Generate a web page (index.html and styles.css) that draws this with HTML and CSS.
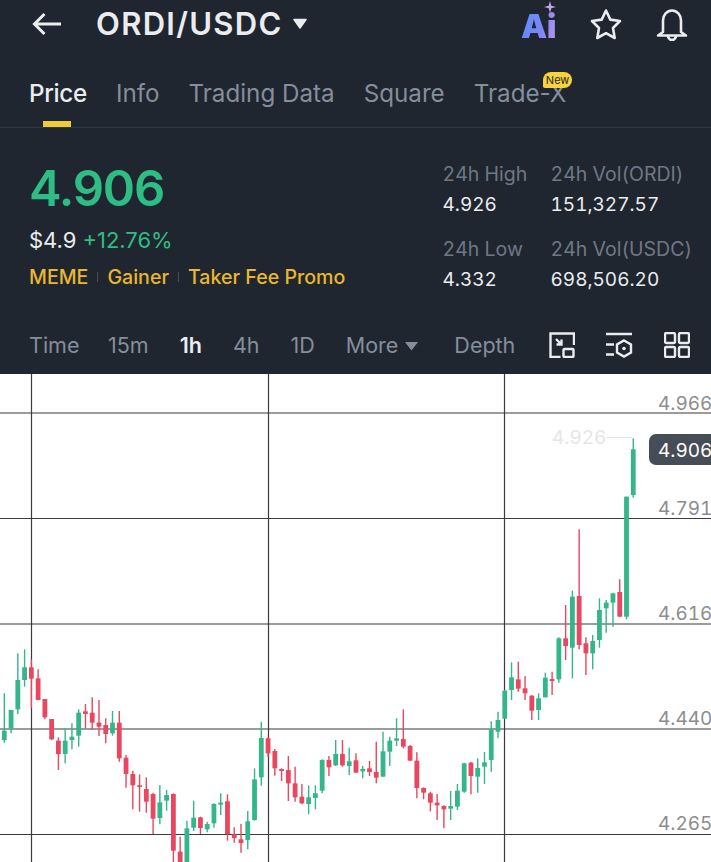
FILE: index.html
```html
<!DOCTYPE html>
<html lang="en">
<head>
    <meta charset="UTF-8">
    <meta name="viewport" content="width=device-width, initial-scale=1.0">
    <title>ORDI/USDC</title>
    <link rel="stylesheet" href="styles.css">
</head>
<body>
    <header class="topbar">
        <svg class="back-icon" width="30" height="24" viewBox="0 0 30 24">
            <path d="M29 12H3M12.5 2L2.5 12L12.5 22"/>
        </svg>
        <div class="pair">ORDI/USDC</div>
        <svg class="pair-caret" width="16" height="12" viewBox="0 0 16 12">
            <path d="M2 1.5H14L8 10Z"/>
        </svg>
        <div class="top-actions">
            <div class="ai-badge">
                <span class="ai-text">Ai</span>
                <svg class="ai-spark" width="12" height="12" viewBox="0 0 12 12">
                    <path d="M6 0L7.3 4.7L12 6L7.3 7.3L6 12L4.7 7.3L0 6L4.7 4.7Z"/>
                </svg>
            </div>
            <svg class="top-icon" width="34" height="32" viewBox="0 0 34 32">
                <path d="M17 2.5L21.3 11.6L31 13L24 20L25.7 30L17 25.2L8.3 30L10 20L3 13L12.7 11.6Z"/>
            </svg>
            <svg class="top-icon" width="34" height="34" viewBox="0 0 34 34">
                <path d="M8 25V13.5C8 8 12 3.5 17 3.5S26 8 26 13.5V25L31 28.5H3L8 25Z"/>
                <path d="M13 29.5C13.5 32 15 33 17 33S20.5 32 21 29.5"/>
            </svg>
        </div>
    </header>

    <nav class="tabs">
        <div class="tab active">Price</div>
        <div class="tab">Info</div>
        <div class="tab">Trading Data</div>
        <div class="tab">Square</div>
        <div class="tab tab-new">Trade-X<span class="new-badge">New</span></div>
    </nav>

    <section class="ticker">
        <div class="ticker-main">
            <div class="last-price">4.906</div>
            <div class="fiat-row">
                <span class="fiat">$4.9</span>
                <span class="change">+12.76%</span>
            </div>
            <div class="tags">
                <span>MEME</span>
                <i></i>
                <span>Gainer</span>
                <i></i>
                <span>Taker Fee Promo</span>
            </div>
        </div>
        <div class="stats">
            <div class="stat">
                <div class="stat-label">24h High</div>
                <div class="stat-value">4.926</div>
            </div>
            <div class="stat">
                <div class="stat-label">24h Vol(ORDI)</div>
                <div class="stat-value">151,327.57</div>
            </div>
            <div class="stat">
                <div class="stat-label">24h Low</div>
                <div class="stat-value">4.332</div>
            </div>
            <div class="stat">
                <div class="stat-label">24h Vol(USDC)</div>
                <div class="stat-value">698,506.20</div>
            </div>
        </div>
    </section>

    <div class="intervals">
        <span class="interval">Time</span>
        <span class="interval">15m</span>
        <span class="interval active">1h</span>
        <span class="interval">4h</span>
        <span class="interval">1D</span>
        <span class="interval more">More<svg width="15" height="10" viewBox="0 0 15 10"><path d="M1 1H14L7.5 9.5Z"/></svg></span>
        <span class="interval depth">Depth</span>
        <div class="chart-tools">
            <svg class="tool-icon" width="26" height="26" viewBox="0 0 26 26">
                <path d="M11.5 25H1.5V1.5H25V13"/>
                <rect x="14.5" y="17" width="10" height="8" rx="1"/>
                <path d="M7 7L12.5 12.5M12.5 7.5V12.5H7.5"/>
            </svg>
            <svg class="tool-icon" width="27" height="26" viewBox="0 0 27 26">
                <path d="M0 2H26M0 12.5H8M0 22.5H8"/>
                <path d="M18 8.5L25 12.5V20.5L18 24.5L11 20.5V12.5Z"/>
                <circle class="tool-dot" cx="18" cy="16.5" r="1.8"/>
            </svg>
            <svg class="tool-icon" width="26" height="26" viewBox="0 0 26 26">
                <rect x="1" y="1" width="10" height="10" rx="1.5"/>
                <rect x="15" y="1" width="10" height="10" rx="1.5"/>
                <rect x="1" y="15" width="10" height="10" rx="1.5"/>
                <rect x="15" y="15" width="10" height="10" rx="1.5"/>
            </svg>
        </div>
    </div>

    <div class="chart">
        <svg id="chartSvg" width="711" height="488" viewBox="0 374 711 488">
            <g class="grid">
                <path d="M0 413H711M0 518.5H711M0 624H711M0 729H711M0 834.5H711"/>
                <path d="M31.5 374V862M268.5 374V862M504.5 374V862"/>
            </g>
            <g id="candles"></g>
            <path class="high-line" d="M607 437.5H632"/>
            <text class="high-label" x="552" y="444">4.926</text>
            <g class="axis">
                <text x="658" y="410">4.966</text>
                <text x="658" y="515">4.791</text>
                <text x="658" y="620">4.616</text>
                <text x="658" y="725">4.440</text>
                <text x="658" y="830">4.265</text>
            </g>
            <rect class="last-pill" x="649" y="434" width="70" height="31" rx="7"/>
            <text class="last-label" x="658" y="457">4.906</text>
        </svg>
    </div>

    <script src="chart.js"></script>
</body>
</html>
```

FILE: styles.css
```css
* {
    margin: 0;
    padding: 0;
    box-sizing: border-box;
}

body {
    width: 711px;
    height: 862px;
    overflow: hidden;
    background-color: #1f262f;
    color: #eaecef;
    font-family: 'Inter', 'Roboto', sans-serif;
}

.topbar {
    display: flex;
    align-items: center;
    height: 47px;
    padding-left: 32px;
    padding-right: 22px;
}

.back-icon {
    fill: none;
    stroke: #eaecef;
    stroke-width: 3;
    margin-right: 34px;
}

.pair {
    font-size: 31px;
    font-weight: 600;
    letter-spacing: 1.3px;
}

.pair-caret {
    fill: #eaecef;
    stroke: #eaecef;
    stroke-width: 1.5;
    stroke-linejoin: round;
    margin-left: 9px;
}

.top-actions {
    display: flex;
    align-items: center;
    gap: 32px;
    margin-left: auto;
}

.ai-badge {
    position: relative;
    width: 38px;
    margin-top: 4px;
    margin-right: -2px;
}

.ai-text {
    display: block;
    font-size: 33px;
    line-height: 36px;
    font-weight: 900;
    letter-spacing: -0.5px;
    background: linear-gradient(100deg, #5a8dfb 0%, #7d86f5 55%, #c39bea 100%);
    -webkit-background-clip: text;
    background-clip: text;
    color: transparent;
}

.ai-spark {
    position: absolute;
    top: -7px;
    right: 3px;
    fill: #c9a4ee;
}

.top-icon {
    fill: none;
    stroke: #eaecef;
    stroke-width: 2.6;
    stroke-linejoin: round;
    stroke-linecap: round;
}

.tabs {
    display: flex;
    gap: 29px;
    height: 81px;
    padding-left: 29px;
    padding-top: 31px;
    border-bottom: 1px solid #303843;
}

.tab {
    position: relative;
    font-size: 24.2px;
    line-height: 32px;
    color: #848e9c;
}

.tab.active {
    color: #eaecef;
    font-weight: 500;
    letter-spacing: -0.3px;
}

.tab.active::after {
    content: '';
    position: absolute;
    left: 14px;
    width: 28px;
    top: 43px;
    height: 6px;
    background-color: #f0cb35;
}

.new-badge {
    position: absolute;
    right: -6px;
    top: -6px;
    padding: 0 3px;
    border-radius: 9px 9px 9px 2px;
    background-color: #f8d33a;
    color: #1f262f;
    font-size: 11px;
    line-height: 16px;
}

.ticker {
    display: flex;
    justify-content: space-between;
    height: 187px;
    padding: 32px 19px 0 29px;
}

.last-price {
    font-size: 49px;
    line-height: 58px;
    font-weight: 600;
    letter-spacing: -1.2px;
    color: #2ebd85;
}

.fiat-row {
    display: flex;
    gap: 6px;
    margin-top: 8px;
    font-size: 22px;
    line-height: 29px;
}

.change {
    color: #2ebd85;
}

.tags {
    display: flex;
    align-items: center;
    gap: 9px;
    margin-top: 8px;
    font-size: 19.6px;
    line-height: 28px;
    font-weight: 500;
    color: #e9b730;
}

.tags i {
    width: 1px;
    height: 10px;
    background-color: #474d57;
}

.stats {
    display: grid;
    grid-template-columns: 108px auto;
    row-gap: 17px;
    align-content: start;
}

.stat-label {
    font-size: 19.5px;
    line-height: 28px;
    color: #6f7886;
    font-feature-settings: 'tnum';
}

.stat-value {
    margin-top: 3px;
    font-size: 19px;
    line-height: 27px;
    color: #eaecef;
    font-feature-settings: 'tnum';
}

.intervals {
    display: flex;
    align-items: center;
    height: 59px;
    padding-left: 29px;
    padding-right: 21px;
}

.interval {
    font-size: 21.5px;
    color: #848e9c;
    margin-right: 31px;
}

.interval:first-child {
    margin-right: 28.5px;
}

.interval.active {
    color: #eaecef;
    font-weight: 600;
}

.interval.more svg {
    fill: #848e9c;
    margin-left: 6px;
    vertical-align: 2px;
}

.interval.depth {
    margin-left: 4px;
    margin-right: 0;
}

.chart-tools {
    display: flex;
    gap: 31px;
    margin-left: auto;
}

.tool-icon {
    fill: none;
    stroke: #eaecef;
    stroke-width: 2.4;
}

.tool-dot {
    fill: #eaecef;
    stroke: none;
}

.chart {
    height: 488px;
    background-color: #ffffff;
}

.chart svg {
    display: block;
}

.grid path {
    fill: none;
    stroke: #3b3b3b;
    stroke-width: 1.2;
}

.candle-wick {
    stroke-width: 1.4;
}

.candle-up {
    stroke: #35b58a;
    fill: #35b58a;
}

.candle-down {
    stroke: #e8475f;
    fill: #e8475f;
}

.candle-up rect,
.candle-down rect {
    stroke: none;
}

.axis text {
    font-size: 19px;
    fill: #8d8d8d;
    font-feature-settings: 'tnum';
}

.high-line {
    fill: none;
    stroke: #e4e4e4;
    stroke-width: 1;
}

.high-label {
    font-size: 19px;
    fill: #e6e6e6;
    font-feature-settings: 'tnum';
}

.last-pill {
    fill: #474d57;
}

.last-label {
    font-size: 19px;
    fill: #ffffff;
    font-feature-settings: 'tnum';
}
```

FILE: chart.js
```js
// Candles in order, one every 6.763px from x = 4.3
// [up/down, wick top, wick bottom, body top, body bottom]
// y values are in thirds of a px, measured from y = 640
const candleData = [
    ['u',160,308,272,300], ['u',210,280,210,265], ['u',40,222,120,208], ['u',28,140,82,120],
    ['d',58,205,82,116], ['d',88,180,115,180], ['d',177,238,177,232], ['d',237,300,237,298],
    ['d',292,390,302,342], ['u',265,370,302,342], ['u',250,328,290,300], ['u',208,320,218,287],
    ['d',192,265,214,222], ['d',172,270,218,248], ['d',180,288,248,260], ['d',235,310,255,282],
    ['u',213,287,248,280], ['d',213,365,248,355], ['d',345,443,353,402], ['d',392,508,402,436],
    ['d',403,515,436,441], ['d',412,518,447,485], ['d',458,582,462,536], ['u',435,553,487,534],
    ['u',450,512,465,482], ['d',460,680,462,632], ['d',590,700,635,700], ['u',542,700,565,700],
    ['u',482,573,533,563], ['d',530,582,532,564], ['u',545,577,552,568], ['u',490,563,492,550],
    ['u',460,525,488,494], ['d',463,602,484,582], ['d',562,608,583,594], ['d',552,638,598,609],
    ['u',513,628,544,600], ['u',385,542,418,540], ['u',245,437,294,412],
    ['d',290,350,295,340], ['d',327,407,333,385], ['d',385,423,387,393], ['d',348,483,390,430],
    ['d',380,485,430,472], ['d',432,493,470,490], ['u',436,523,472,492], ['u',436,508,460,474],
    ['u',358,460,360,452], ['d',348,408,360,382], ['u',300,378,342,376], ['d',300,380,342,376],
    ['u',323,405,364,378], ['d',340,398,361,398], ['u',378,415,387,394], ['d',363,408,385,396],
    ['d',305,430,396,413], ['u',275,410,334,410], ['u',290,378,302,335], ['u',235,318,295,302],
    ['d',208,325,297,320], ['d',315,363,318,362], ['d',337,475,362,444], ['d',442,478,444,458],
    ['d',455,514,460,488], ['d',462,540,488,496], ['d',496,565,498,508], ['u',453,540,498,506],
    ['u',432,510,452,500], ['u',368,458,370,455], ['d',366,463,368,408], ['u',355,458,384,410],
    ['u',336,432,367,380], ['u',244,395,268,360], ['u',215,295,240,275], ['u',150,237,152,236],
    ['u',67,180,112,150], ['d',65,155,118,146], ['d',108,180,145,160],
    ['d',165,240,167,212], ['u',160,240,175,210], ['u',98,172,113,172], ['d',95,165,117,123],
    ['u',-8,128,-5,118], ['d',-105,60,-5,18], ['u',-148,115,-130,23], ['d',-332,28,-132,15],
    ['d',-8,105,10,40], ['u',-15,88,3,40], ['u',-125,23,-90,0], ['u',-120,-22,-112,-95],
    ['u',-142,-40,-140,-112], ['d',-182,-70,-144,-70], ['u',-430,-62,-430,-70], ['u',-605,-427,-572,-435]
];

const SVG_NS = 'http://www.w3.org/2000/svg';
const candlesGroup = document.getElementById('candles');

function toY(value) {
    return 640 + value / 3;
}

candleData.forEach((candle, i) => {
    const x = 4.3 + i * 6.763;
    const group = document.createElementNS(SVG_NS, 'g');
    group.setAttribute('class', candle[0] === 'u' ? 'candle-up' : 'candle-down');

    const wick = document.createElementNS(SVG_NS, 'line');
    wick.setAttribute('class', 'candle-wick');
    wick.setAttribute('x1', x);
    wick.setAttribute('x2', x);
    wick.setAttribute('y1', toY(candle[1]));
    wick.setAttribute('y2', toY(candle[2]));
    group.appendChild(wick);

    const body = document.createElementNS(SVG_NS, 'rect');
    body.setAttribute('x', x - 2.4);
    body.setAttribute('width', 4.8);
    body.setAttribute('y', toY(candle[3]));
    body.setAttribute('height', (candle[4] - candle[3]) / 3);
    group.appendChild(body);

    candlesGroup.appendChild(group);
});
```
